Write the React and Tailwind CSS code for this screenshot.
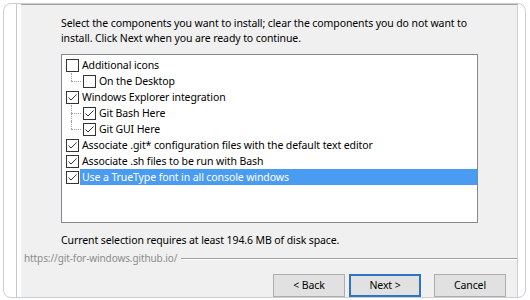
const items = [
  { label: 'Additional icons', checked: false, level: 0 },
  { label: 'On the Desktop', checked: false, level: 1, last: true },
  { label: 'Windows Explorer integration', checked: true, level: 0 },
  { label: 'Git Bash Here', checked: true, level: 1 },
  { label: 'Git GUI Here', checked: true, level: 1, last: true },
  { label: 'Associate .git* configuration files with the default text editor', checked: true, level: 0 },
  { label: 'Associate .sh files to be run with Bash', checked: true, level: 0 },
  { label: 'Use a TrueType font in all console windows', checked: true, level: 0, selected: true },
];

function Box({ checked }) {
  return (
    <span className="w-[13px] h-[13px] border border-[#333333] bg-white flex items-center justify-center shrink-0">
      {checked && (
        <svg width="11" height="11" viewBox="0 0 11 11">
          <path d="M1.5 5.5 L4 8 L9.5 2.5" fill="none" stroke="#333333" strokeWidth="1" />
        </svg>
      )}
    </span>
  );
}

function Row({ item }) {
  return (
    <div className="h-[16px] flex items-center">
      {item.level === 1 && (
        <div className="w-[17px] h-full relative shrink-0">
          <div className={`absolute left-[5px] top-0 border-l border-dotted border-[#a0a0a0] ${item.last ? 'h-[8px]' : 'h-[16px]'}`} />
          <div className="absolute left-[5px] top-[8px] w-[10px] border-t border-dotted border-[#a0a0a0]" />
        </div>
      )}
      <Box checked={item.checked} />
      <span
        className={`ml-[1px] pl-[2px] flex-1 h-full flex items-center whitespace-nowrap ${
          item.selected ? 'bg-[#4a9cf2] text-white' : 'text-black'
        }`}
      >
        {item.label}
      </span>
    </div>
  );
}

function Button({ children, primary }) {
  return (
    <button
      className={`w-[72px] h-[23px] bg-[#e1e1e1] text-black flex items-center justify-center ${
        primary ? 'border-2 border-[#2f74c4]' : 'border border-[#adadad]'
      }`}
    >
      {children}
    </button>
  );
}

export default function App() {
  return (
    <div
      className="w-[530px] h-[300px] bg-white pt-[3px] pl-[3px] text-[10.5px] leading-[15px] tracking-[-0.1px]"
      style={{ fontFamily: '"Noto Sans", "Liberation Sans", sans-serif' }}
    >
      <div className="w-[523px] h-[295px] rounded-[8px] border border-[#cbcdd8] overflow-hidden flex bg-white">
        <div className="w-[12px] shrink-0" />
        <div className="w-px bg-[#c6c7d0] shrink-0" />
        <div className="w-[4px] shrink-0" />

        <div className="w-[497px] shrink-0 bg-[#f0f0f0] border-t border-[#a0a0a0] border-r border-r-[#cfcfcf] flex flex-col">
          <div className="pl-[40px] mt-[11px]">
            <p className="whitespace-nowrap">Select the components you want to install; clear the components you do not want to</p>
            <p className="whitespace-nowrap">install. Click Next when you are ready to continue.</p>

            <div className="mt-[8px] w-[417px] h-[169px] bg-white border border-[#828790] pt-[2px] pl-[4px]">
              {items.map((it) => (
                <Row key={it.label} item={it} />
              ))}
            </div>

            <p className="mt-[10px] whitespace-nowrap">Current selection requires at least 194.6 MB of disk space.</p>
          </div>

          <div className="mt-[3px] ml-[3px] flex items-center">
            <span className="text-[10px] text-[#8c8c8c] whitespace-nowrap">https://git-for-windows.github.io/</span>
            <div className="flex-1 ml-[4px] border-t border-[#a0a0a0] border-b border-b-white" />
          </div>

          <div className="mt-[8px] flex justify-end pr-[11px]">
            <div className="flex gap-[4px]">
              <Button>&lt; Back</Button>
              <Button primary>Next &gt;</Button>
            </div>
            <div className="ml-[13px]">
              <Button>Cancel</Button>
            </div>
          </div>
        </div>

        <div className="flex-1" />
      </div>
    </div>
  );
}
